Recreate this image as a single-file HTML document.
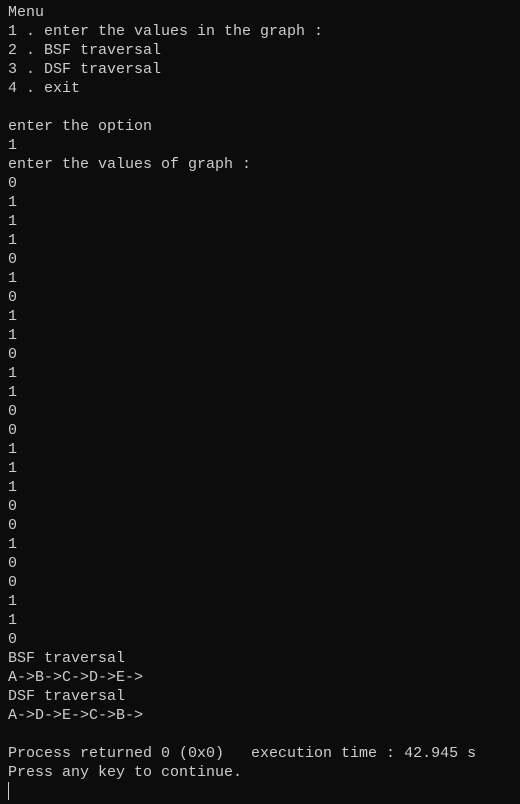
<!DOCTYPE html>
<html><head><meta charset="utf-8"><style>
html,body{margin:0;padding:0;background:#0c0c0c;width:520px;height:804px;overflow:hidden}
pre{margin:0;position:absolute;left:8px;top:3px;font-family:"Liberation Mono","DejaVu Sans Mono",monospace;font-size:15px;line-height:19px;color:#cccccc}
.cur{position:absolute;left:8px;top:782px;width:1px;height:18px;background:#cccccc}
</style></head><body><pre>Menu
1 . enter the values in the graph :
2 . BSF traversal
3 . DSF traversal
4 . exit

enter the option
1
enter the values of graph :
0
1
1
1
0
1
0
1
1
0
1
1
0
0
1
1
1
0
0
1
0
0
1
1
0
BSF traversal
A-&gt;B-&gt;C-&gt;D-&gt;E-&gt;
DSF traversal
A-&gt;D-&gt;E-&gt;C-&gt;B-&gt;

Process returned 0 (0x0)   execution time : 42.945 s
Press any key to continue.</pre><div class="cur"></div></body></html>
